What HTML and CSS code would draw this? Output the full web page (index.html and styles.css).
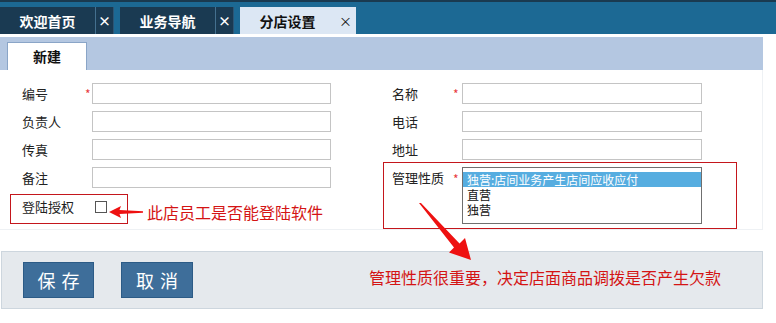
FILE: index.html
```html
<!DOCTYPE html>
<html lang="zh-CN">
<head>
<meta charset="utf-8">
<title>分店设置</title>
<link rel="stylesheet" href="styles.css">
</head>
<body>
<div class="topbar">
  <div class="tab tab-dark"><span class="tab-label">欢迎首页</span><span class="tab-close">×</span></div>
  <div class="tab tab-dark"><span class="tab-label">业务导航</span><span class="tab-close">×</span></div>
  <div class="tab tab-active"><span class="tab-label">分店设置</span><span class="tab-close">×</span></div>
</div>

<div class="panel">
  <div class="panel-head"><div class="subtab">新建</div></div>
  <div class="form">
    <div class="col col-left">
      <div class="row"><span class="lbl">编号</span><span class="req">*</span><span class="input"></span></div>
      <div class="row"><span class="lbl">负责人</span><span class="req"></span><span class="input"></span></div>
      <div class="row"><span class="lbl">传真</span><span class="req"></span><span class="input"></span></div>
      <div class="row"><span class="lbl">备注</span><span class="req"></span><span class="input"></span></div>
      <div class="auth-row">
        <div class="auth-box"><span class="lbl auth-lbl">登陆授权</span><span class="checkbox"></span></div>
        <svg class="arrow-left" width="36" height="12" viewBox="0 0 36 12">
          <polygon points="0,6 12,0 10.5,4 34,5.3 34,6.7 10.5,8 12,12" fill="#ee1111"/>
        </svg>
        <span class="note">此店员工是否能登陆软件</span>
      </div>
    </div>
    <div class="col col-right">
      <div class="row"><span class="lbl lbl-r">名称</span><span class="req req-r">*</span><span class="input input-r"></span></div>
      <div class="row"><span class="lbl lbl-r">电话</span><span class="req req-r"></span><span class="input input-r"></span></div>
      <div class="row"><span class="lbl lbl-r">地址</span><span class="req req-r"></span><span class="input input-r"></span></div>
      <div class="nature-box">
        <span class="lbl lbl-r nature-lbl">管理性质</span><span class="req req-r nature-req">*</span>
        <div class="listbox">
          <div class="opt opt-selected">独营:店间业务产生店间应收应付</div>
          <div class="opt">直营</div>
          <div class="opt">独营</div>
        </div>
      </div>
    </div>
  </div>
</div>

<div class="actions">
  <button class="btn">保存</button>
  <button class="btn btn-cancel">取消</button>
  <span class="note note-bottom">管理性质很重要，决定店面商品调拨是否产生欠款</span>
</div>

<svg class="arrow-big" width="60" height="64" viewBox="0 0 60 64">
  <polygon points="0,0 35,44.5 30,49.5 52,57 46,35 40.5,40.5 1.2,-0.8" fill="#ee1111"/>
</svg>
</body>
</html>
```

FILE: styles.css
```css
* { box-sizing: border-box; }

body {
  margin: 0;
  background: #ffffff;
  font-family: "Microsoft YaHei", "Noto Sans CJK SC", "Noto Sans", sans-serif;
  color: #222;
  position: relative;
  width: 776px;
  height: 323px;
  overflow: hidden;
}

/* top tab bar */
.topbar {
  height: 34px;
  background: #1c6994;
  border-top: 2px solid #1a3a50;
  display: flex;
  align-items: flex-end;
}
.tab {
  height: 27px;
  display: flex;
  margin-right: 6px;
}
.tab-label {
  width: 95px;
  text-align: center;
  font-size: 14px;
  font-weight: bold;
  line-height: 29px;
}
.tab-close {
  width: 19px;
  text-align: center;
  font-size: 13px;
  font-weight: bold;
  line-height: 28px;
}
.tab-dark { background: #1a3a52; color: #ffffff; }
.tab-dark .tab-close {
  border-left: 1px solid #44708f;
  border-right: 1px solid #2d5675;
}
.tab-active { background: #dce7f4; color: #111; }
.tab-active .tab-close { width: 21px; font-weight: normal; }

/* main panel */
.panel {
  width: 763px;
  margin-top: 3px;
}
.panel-head {
  height: 33px;
  background: #b4c7e1;
  display: flex;
  align-items: flex-end;
  padding-left: 7px;
}
.subtab {
  width: 80px;
  height: 28px;
  background: #ffffff;
  border: 1px solid #8aa5c7;
  border-bottom: none;
  text-align: center;
  font-size: 14px;
  font-weight: bold;
  line-height: 26px;
  color: #111;
}
.form {
  display: flex;
  padding: 13px 0 0 22px;
  height: 160px;
  border-right: 1px solid #eef1f4;
  border-bottom: 1px solid #eef1f4;
}
.col {
  display: flex;
  flex-direction: column;
  gap: 7px;
}
.col-left { width: 370px; }
.row {
  display: flex;
  align-items: center;
  height: 21px;
}
.lbl {
  width: 65px;
  font-size: 13px;
  line-height: 16px;
  color: #222;
}
.lbl-r { width: 64px; }
.req {
  width: 5px;
  color: #e8393c;
  font-size: 12px;
  line-height: 12px;
  align-self: flex-start;
  padding-top: 5px;
  margin-left: -2px;
  margin-right: 2px;
}
.req-r { width: 6px; margin-left: -3px; margin-right: 3px; }
.input {
  width: 239px;
  height: 21px;
  border: 1px solid #c4c4c4;
  background: #fff;
}
.input-r { width: 240px; }

/* login authorization row */
.auth-row {
  position: relative;
  display: flex;
  align-items: center;
  margin-top: -1px;
  margin-left: -12px;
}
.auth-box {
  width: 118px;
  height: 30px;
  border: 1px solid #c4161c;
  display: flex;
  align-items: flex-start;
  padding: 4px 0 0 11px;
}
.auth-lbl { width: 73px; line-height: 16px; }
.checkbox {
  width: 12px;
  height: 12px;
  border: 1px solid #555;
  background: #fff;
  margin-top: 2px;
}
.arrow-left {
  position: absolute;
  left: 99px;
  top: 12px;
}
.note {
  color: #d41414;
  font-size: 16px;
  line-height: 20px;
  margin-left: 19px;
  margin-top: 6px;
}

/* management nature box */
.nature-box {
  margin-top: -5px;
  margin-left: -9px;
  width: 354px;
  height: 67px;
  border: 1px solid #c4161c;
  display: flex;
  align-items: flex-start;
  padding: 4px 0 0 8px;
}
.nature-lbl { padding-top: 3px; }
.nature-req { padding-top: 6px; }
.listbox {
  width: 240px;
  height: 57px;
  border: 1px solid #6f6f6f;
  background: #fff;
  padding-top: 4px;
}
.opt {
  height: 15px;
  font-size: 12px;
  line-height: 15px;
  padding-left: 4px;
  color: #111;
  white-space: nowrap;
}
.opt-selected { background: #56ade0; color: #ffffff; }

/* bottom action bar */
.actions {
  margin: 21px 0 0 1px;
  width: 762px;
  height: 58px;
  background: #e5e9ed;
  border: 1px solid #cdd6de;
  display: flex;
  align-items: flex-start;
  padding: 10px 0 0 21px;
}
.btn {
  width: 71px;
  height: 36px;
  background: #3e6e9a;
  border: 1px solid #2c5b86;
  color: #ffffff;
  font-family: "Microsoft YaHei", "Noto Sans CJK SC", sans-serif;
  font-size: 18px;
  letter-spacing: 6px;
  padding: 0 0 0 6px;
  line-height: 34px;
}
.btn-cancel { width: 72px; margin-left: 27px; }
.note-bottom {
  margin-left: 176px;
  margin-top: 5px;
}

.arrow-big {
  position: absolute;
  left: 419px;
  top: 203px;
}
```
